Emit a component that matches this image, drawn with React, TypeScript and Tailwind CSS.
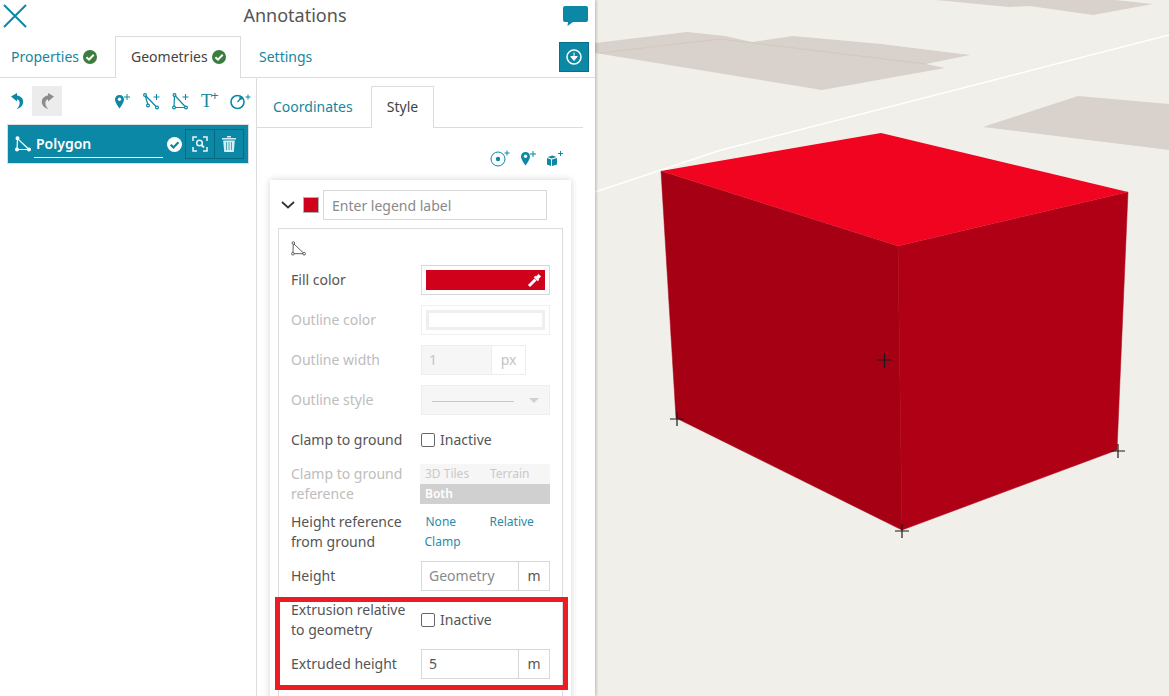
const teal = "#0a88a5";

const Check = ({ bg = "#3a7d3c", fg = "#fff", size = 14 }: { bg?: string; fg?: string; size?: number }) => (
  <svg width={size} height={size} viewBox="0 0 14 14" className="shrink-0">
    <circle cx="7" cy="7" r="7" fill={bg} />
    <path d="M3.400 7.200 6 9.700 10.700 4.800" fill="none" stroke={fg} strokeWidth="2" />
  </svg>
);

const Tri = ({ color, size = 16, sw = 1.2 }: { color: string; size?: number; sw?: number }) => (
  <svg width={size} height={size} viewBox="0 0 16 16" fill="none" stroke={color} strokeWidth={sw}>
    <path d="M2.500 2.500 2 13.500 14 13.500Z" />
    <circle cx="2.500" cy="2.200" r="1.400" fill="#fff" />
    <circle cx="2" cy="13.600" r="1.400" fill="#fff" />
    <circle cx="14" cy="13.600" r="1.400" fill="#fff" />
  </svg>
);

const PinPlus = () => (
  <svg width="17" height="17" viewBox="0 0 17 17">
    <path d="M5.500 2C2.900 2 1 4 1 6.400 1 9.500 5.500 15.500 5.500 15.500S10 9.500 10 6.400C10 4 8.100 2 5.500 2Z" fill={teal} />
    <circle cx="5.500" cy="6.200" r="1.700" fill="#fff" />
    <path d="M10 4h6M13 1v6" stroke={teal} strokeWidth="1" fill="none" />
  </svg>
);

const LinePlus = () => (
  <svg width="17" height="17" viewBox="0 0 17 17" fill="none" stroke={teal} strokeWidth="1.200">
    <path d="M2 2 5 12M2 2 14 14.500" />
    <circle cx="2" cy="2" r="1.400" fill="#fff" />
    <circle cx="5" cy="12.500" r="1.400" fill="#fff" />
    <circle cx="14" cy="14.500" r="1.400" fill="#fff" />
    <path d="M10.500 4h6M13.500 1v6" strokeWidth="1" />
  </svg>
);

const TriPlus = () => (
  <svg width="17" height="17" viewBox="0 0 17 17" fill="none" stroke={teal} strokeWidth="1.200">
    <path d="M2.500 2 2 14.500 14 14.500Z" />
    <circle cx="2.500" cy="2" r="1.400" fill="#fff" />
    <circle cx="2" cy="14.500" r="1.400" fill="#fff" />
    <circle cx="14" cy="14.500" r="1.400" fill="#fff" />
    <path d="M10.500 4h6M13.500 1v6" strokeWidth="1" />
  </svg>
);

const CirclePlus = () => (
  <svg width="21" height="17" viewBox="0 0 21 17" fill="none" stroke={teal} strokeWidth="1.600">
    <circle cx="7.500" cy="9" r="6.500" />
    <path d="M7.500 9 11 5" strokeWidth="1.200" />
    <circle cx="11" cy="5" r="1.800" fill={teal} stroke="none" />
    <path d="M15.500 4h5M18 1.500v5" strokeWidth="1" />
  </svg>
);

const Field = ({ value, unit, placeholder, disabled, w, uw = "w-[30px]" }: { value?: string; unit: string; placeholder?: boolean; disabled?: boolean; w: string; uw?: string }) => (
  <div className={`flex h-[30px] border ${disabled ? "border-[#eeeeee] text-[#c4c4c4]" : "border-[#d8d8d8] text-[#555]"}`}>
    <div className={`${w} flex items-center pl-[7px] border-r ${disabled ? "bg-[#f6f6f6] border-[#eeeeee]" : "border-[#d8d8d8]"} ${placeholder ? "text-[#8a8a8a]" : ""}`}>{value}</div>
    <div className={`${uw} flex items-center justify-center`}>{unit}</div>
  </div>
);

const Box = () => <span className="w-[14px] h-[14px] rounded-[2px] border border-[#666] bg-white inline-block shrink-0" />;

const Row = ({ label, muted, children, h = "h-[30px]", mb = "mb-[10px]" }: { label: React.ReactNode; muted?: boolean; children: React.ReactNode; h?: string; mb?: string }) => (
  <div className={`flex items-center ${h} ${mb}`}>
    <div className={`w-[130px] shrink-0 leading-[20px] ${muted ? "text-[#bdbdbd]" : "text-[#555]"}`}>{label}</div>
    {children}
  </div>
);

const ColorField = ({ muted }: { muted?: boolean }) => (
  <div className={`w-[129px] h-[30px] border p-[4px] ${muted ? "border-[#f0f0f0]" : "border-[#d8d8d8]"}`}>
    {muted ? (
      <div className="h-full bg-[#efefef] p-[3px]"><div className="h-full bg-white" /></div>
    ) : (
      <div className="h-full bg-[#d0021b] flex items-center justify-end pr-[3px]">
        <svg width="15" height="15" viewBox="0 0 15 15" fill="none" stroke="#fff">
          <path d="M2 13 8.500 6.500" strokeWidth="3" />
          <path d="M7.500 3.500 11.500 7.500" strokeWidth="2.200" />
          <path d="M10 5 12.800 2.200" strokeWidth="3.600" />
        </svg>
      </div>
    )}
  </div>
);

const MapView = () => (
  <svg className="flex-1 h-full" viewBox="595 0 574 696" preserveAspectRatio="none">
    <rect x="595" y="0" width="574" height="696" fill="#f1efe9" />
    <g fill="#d9d1cb">
      <path d="M595 43 687 32 725 36 752 42 793 36 881 44 970 55 926 64 945 68 822 90 595 53Z" />
      <path d="M936 0 1009 7 1030 6 1093 15 1153 4 1115 0Z" />
      <path d="M983 127 1078 96 1169 104 1169 150Z" />
    </g>
    <path d="M600 53 720 39 926 64" stroke="#cfc4b8" strokeWidth="0.700" fill="none" />
    <path d="M595 192 721 150 994 80 1169 35" stroke="#fff" strokeWidth="1.400" fill="none" />
    <path d="M661 171 898 246 902 530 676 418Z" fill="#a50014" stroke="#a50014" strokeWidth="0.500" />
    <path d="M898 246 1128 192 1117 450 902 530Z" fill="#b00016" stroke="#b00016" strokeWidth="0.500" />
    <path d="M661 171 881 133 1128 192 898 246Z" fill="#f00420" />
    <g stroke="#1a1a1a" strokeWidth="1.200" fill="none">
      <path d="M877 360h15M884.500 353v15" />
      <path d="M670 419h14M677 412v14" />
      <path d="M1111 451h14M1118 444v14" />
      <path d="M895 531h14M902 524v14" />
    </g>
  </svg>
);

const Undo = ({ color, flip }: { color: string; flip?: boolean }) => (
  <svg className={flip ? "-scale-x-100" : ""} width="15" height="18" viewBox="0 0 15 18" fill={color}>
    <path d="M1 4.500 7 1 7 3.500C11.500 4 14 7.500 13 11.500 12.300 14.200 10 16.500 6.500 17 9.500 14.800 10.200 11.500 9.300 9.300 8.900 8.300 8 7.500 7 7.300L7 9.500Z" />
  </svg>
);

export default function App() {
  return (
    <div className="relative flex w-[1169px] h-[696px] overflow-hidden bg-white text-[14px] leading-[20px] text-[#555]" style={{ fontFamily: '"Noto Sans", sans-serif' }}>
      <div className="w-[595px] h-full shrink-0 flex flex-col shadow-[1px_0_3px_rgba(0,0,0,0.25)] z-10 bg-white">
        <div className="h-[36px] relative flex items-center justify-center shrink-0">
          <svg className="absolute left-[3px] top-[4px]" width="24" height="24" viewBox="0 0 24 24" stroke={teal} strokeWidth="2" fill="none">
            <path d="M1 1 23 23M23 1 1 23" />
          </svg>
          <div className="text-[18px] leading-[24px] text-[#555] -mt-[7px] -ml-[5px]">Annotations</div>
          <svg className="absolute left-[563px] top-[6px]" width="25" height="21" viewBox="0 0 25 21" fill={teal}>
            <path d="M2 0h21a2 2 0 0 1 2 2v12a2 2 0 0 1-2 2H10L4.500 20 5 16H2a2 2 0 0 1-2-2V2a2 2 0 0 1 2-2Z" />
          </svg>
        </div>

        <div className="h-[42px] flex shrink-0 border-b border-[#dcdcdc] relative">
          <div className="w-[115px] flex items-center gap-[4px] pl-[11px] text-[#15869f]">Properties <Check /></div>
          <div className="w-[126px] h-[42px] flex items-center gap-[4px] pl-[15px] pb-[1px] border border-b-0 border-[#dcdcdc] bg-white text-[#444]">Geometries <Check /></div>
          <div className="flex items-center pl-[18px] text-[#15869f]">Settings</div>
          <div className="absolute left-[559px] top-[6px] w-[30px] h-[30px] flex items-center justify-center border border-[#08708a]" style={{ background: teal }}>
            <svg width="16" height="16" viewBox="0 0 16 16">
              <circle cx="8" cy="8" r="7" fill="none" stroke="#fff" strokeWidth="1.500" />
              <path d="M8 3.500v5M4.800 7.500 8 11.500l3.200-4Z" stroke="#fff" fill="#fff" strokeWidth="1" />
            </svg>
          </div>
        </div>

        <div className="flex flex-1 min-h-0">
          <div className="w-[257px] shrink-0 border-r border-[#dcdcdc]">
            <div className="h-[30px] mt-[8px] flex items-center">
              <div className="w-[32px] pl-[10px]"><Undo color={teal} /></div>
              <div className="w-[30px] h-[30px] bg-[#ececec] flex items-center justify-center"><Undo color="#8c8c8c" flip /></div>
              <div className="flex items-center ml-[52px] gap-[12px]">
                <PinPlus />
                <LinePlus />
                <TriPlus />
                <div className="relative w-[17px] h-[20px] text-[#15869f] text-[18px] leading-[20px] font-['Liberation_Serif',serif]">
                  T<span className="absolute left-[10px] -top-[5px] text-[13px] font-['Liberation_Sans',sans-serif]">+</span>
                </div>
                <CirclePlus />
              </div>
            </div>
            <div className="mx-[7px] mt-[8px] h-[40px] border border-[#dcdcdc]">
              <div className="h-full flex items-center pl-[7px] text-white" style={{ background: teal }}>
                <Tri color="#fff" size={16} />
                <div className="w-[129px] ml-[3px] mr-[3px] h-[25px] border-b border-white font-semibold pl-[2px] text-[14px] leading-[22px] mt-[2px]">Polygon</div>
                <span className="ml-[1px]"><Check bg="#fff" fg={teal} size={15} /></span>
                <div className="flex ml-[3px] h-[30px] border border-[#06697f]">
                  <div className="w-[29px] flex items-center justify-center border-r border-[#06697f]">
                    <svg width="16" height="16" viewBox="0 0 16 16" fill="none" stroke="#e8f6f9" strokeWidth="1.500">
                      <path d="M1 5V1h4M11 1h4v4M15 11v4h-4M5 15H1v-4" />
                      <circle cx="7.500" cy="7" r="2.800" />
                      <path d="M9.500 9 12 11.500" strokeWidth="2" />
                    </svg>
                  </div>
                  <div className="w-[28px] flex items-center justify-center">
                    <svg width="14" height="16" viewBox="0 0 14 16" fill="#d6eef3">
                      <path d="M0 2h14v1.500H0ZM5 0h4v1.500H5ZM1.200 4.500h11.600L11.800 16H2.200Z" />
                      <path d="M4.500 6v8M7 6v8M9.500 6v8" stroke={teal} strokeWidth=".7" />
                    </svg>
                  </div>
                </div>
              </div>
            </div>
          </div>

          <div className="w-[326px] flex flex-col">
            <div className="h-[42px] mt-[8px] flex border-b border-[#dcdcdc] shrink-0">
              <div className="w-[114px] flex items-center pl-[16px] text-[#15869f]">Coordinates</div>
              <div className="w-[63px] h-[42px] flex items-center justify-center pb-[1px] border border-b-0 border-[#dcdcdc] bg-white text-[#444]">Style</div>
            </div>
            <div className="h-[52px] flex items-center justify-end gap-[9px] pr-[19px] pt-[8px] shrink-0">
              <svg width="21" height="17" viewBox="0 0 21 17" fill="none" stroke={teal}>
                <circle cx="8" cy="9" r="7" strokeWidth="1" />
                <circle cx="8" cy="9" r="2.200" fill={teal} stroke="none" />
                <path d="M14.500 3h5M17 .5v5" />
              </svg>
              <PinPlus />
              <svg width="18" height="17" viewBox="0 0 18 17" fill={teal}>
                <path d="M1 8 5 9.500 5 16 1 14.500Z" />
                <path d="M6 9.500 11 8 11 14.500 6 16Z" />
                <path d="M1.500 7 6.500 5.500 10.500 7 5.500 8.500Z" />
                <path d="M12 3.500h5M14.500 1v5" stroke={teal} strokeWidth="1" fill="none" />
              </svg>
            </div>
            <div className="ml-[13px] w-[301px] flex-1 px-[8px] pt-[10px] shadow-[0_0_7px_rgba(0,0,0,0.18)]">
              <div className="flex items-center h-[30px]">
                <svg className="ml-[3px]" width="14" height="8" viewBox="0 0 14 8" fill="none" stroke="#333" strokeWidth="1.800"><path d="M1 1 7 6.500 13 1" /></svg>
                <span className="w-[16px] h-[16px] ml-[8px] bg-[#d0021b] border border-[#b0b0b0]" />
                <div className="w-[224px] h-[30px] ml-[4px] pt-[1px] border border-[#d8d8d8] flex items-center pl-[8px] text-[#8a8a8a]">Enter legend label</div>
              </div>
              <div className="mt-[8px] border border-[#dcdcdc] px-[12px] pt-[12px] h-[480px]">
                <div className="h-[16px] mb-[8px]"><Tri color="#555" size={15} sw={1} /></div>
                <Row label="Fill color"><ColorField /></Row>
                <Row label="Outline color" muted><ColorField muted /></Row>
                <Row label="Outline width" muted><Field value="1" unit="px" disabled w="w-[70px]" uw="w-[33px]" /></Row>
                <Row label="Outline style" muted>
                  <div className="w-[129px] h-[30px] bg-[#f6f6f6] border border-[#eeeeee] flex items-center pl-[10px] pr-[10px] justify-between">
                    <div className="w-[82px] h-px bg-[#c8c8c8] mt-[2px]" />
                    <div className="w-0 h-0 border-x-[5px] border-x-transparent border-t-[5px] border-t-[#d0d0d0]" />
                  </div>
                </Row>
                <div className="flex items-center h-[30px] mb-[9px]">
                  <div className="w-[130px] text-[#555]">Clamp to ground</div>
                  <div className="flex items-center gap-[5px]"><Box /><span>Inactive</span></div>
                </div>
                <div className="flex h-[40px] mb-[8px]">
                  <div className="w-[129px] text-[#bdbdbd]">Clamp to ground<br />reference</div>
                  <div className="w-[130px] text-[12px] leading-[20px]">
                    <div className="h-[20px] flex bg-[#f6f6f6] text-[#c9c9c9]"><span className="w-[70px] pl-[5px]">3D Tiles</span><span>Terrain</span></div>
                    <div className="h-[20px] bg-[#d0d0d0] text-white pl-[5px] font-semibold">Both</div>
                  </div>
                </div>
                <div className="flex h-[40px] mb-[9px]">
                  <div className="w-[130px] text-[#555]">Height reference<br />from ground</div>
                  <div className="w-[130px] text-[12px] leading-[20px] text-[#2a8ba8]">
                    <div className="flex"><span className="w-[69px] pl-[5px]">None</span><span>Relative</span></div>
                    <div className="pl-[4px]">Clamp</div>
                  </div>
                </div>
                <Row label="Height" mb="mb-[9px]"><Field value="Geometry" unit="m" placeholder w="w-[97px]" /></Row>
                <Row label={<>Extrusion relative<br />to geometry</>} h="h-[40px]" mb="mb-[9px]">
                  <div className="flex items-center gap-[5px]"><Box /><span>Inactive</span></div>
                </Row>
                <Row label="Extruded height"><Field value="5" unit="m" w="w-[97px]" /></Row>
              </div>
            </div>
          </div>
        </div>
      </div>

      <MapView />

      <div className="absolute left-[275px] top-[597px] w-[293px] h-[93px] border-[5px] border-[#ed1c24] z-20" />
    </div>
  );
}
